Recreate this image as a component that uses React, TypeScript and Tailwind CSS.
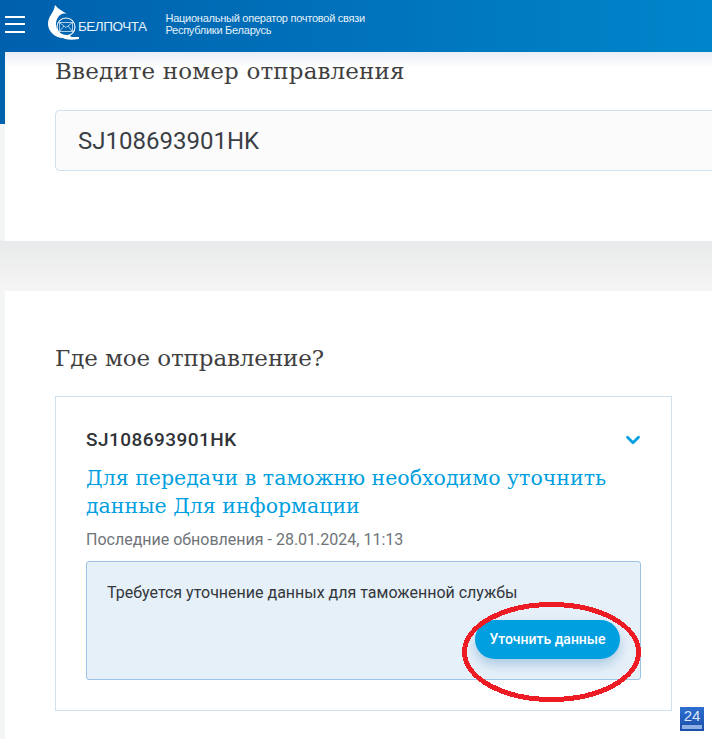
import { ChevronDown } from "lucide-react";

const slab = "font-['DejaVu_Serif','Liberation_Serif',serif]";

function Logo() {
  return (
    <div className="flex items-end">
      <svg width="32" height="36" viewBox="0 0 32 36" className="shrink-0">
        <path d="M7 0 C10 4 15 6 19 9 C15 8 13 9 11 11 C7 15 7 23 11 27 C14 30 20 31 23 29 C20 33 26 32 31 32 L31 34 C24 35 18 35 15 33 C7 33 0 26 0 19 C0 11 6 8 7 0Z" fill="#fff" />
        <circle cx="18" cy="22" r="9" fill="none" stroke="#fff" strokeWidth="1.1" />
        <path d="M11.5 17.5 H24.5 V26.5 H11.5Z M11.5 17.5 L18 22.5 L24.5 17.5 M11.5 26.5 L16 21 M24.5 26.5 L20 21" fill="none" stroke="#d7e8f5" strokeWidth="0.8" />
      </svg>
      <span className="-ml-[2px] mb-[5px] font-['Liberation_Sans',sans-serif] text-[13.5px] leading-[18px] tracking-[-0.5px] text-[#e6f1f9]">
        БЕЛПОЧТА
      </span>
    </div>
  );
}

export default function App() {
  return (
    <div className="relative h-[739px] w-[712px] overflow-hidden bg-[#f4f5f5] font-['Roboto',sans-serif]">
      {/* Header */}
      <header className="flex h-[52px] items-center bg-gradient-to-r from-[#0060ad] to-[#0085ca] pl-[5px]">
        <div className="-mt-[4px] flex w-5 flex-col gap-[5.5px]">
          <span className="h-[2px] bg-white" />
          <span className="h-[2px] bg-white" />
          <span className="h-[2px] bg-white" />
        </div>
        <div className="ml-[23px] -mt-[6px]">
          <Logo />
        </div>
        <p className="ml-[19px] -mt-[4px] font-['Liberation_Sans',sans-serif] text-[11px] leading-3 tracking-[-0.25px] text-[#e6f1f9]">
          Национальный оператор почтовой связи
          <br />
          Республики Беларусь
        </p>
      </header>

      <div className="flex">
        <div className="h-[72px] w-[5px] shrink-0 bg-[#0061ad]" />
        <div className="flex-1">
          {/* Tracking form */}
          <section className="h-[189px] bg-gradient-to-b from-[#e8eef5] via-white via-[8%] to-white pl-[50px] pt-1">
            <h2 className={`${slab} text-[23px] leading-[30px] tracking-[0.15px] text-[#3f3f3f]`}>
              Введите номер отправления
            </h2>
            <div className="mt-6 flex h-[61px] items-center rounded-l-[5px] border border-r-0 border-[#cfe0ee] bg-[#fbfbfb] pl-[22px] text-[24px] text-[#3a3f46]">
              SJ108693901HK
            </div>
          </section>
        </div>
      </div>

      <div className="h-[50px] bg-gradient-to-b from-[#e9eaeb] to-[#f5f5f5]" />

      {/* Result */}
      <section className="ml-[5px] h-[448px] bg-white pl-[50px] pt-[52px]">
        <h2 className={`${slab} text-[23px] leading-[30px] tracking-[-0.1px] text-[#3f3f3f]`}>
          Где мое отправление?
        </h2>
        <div className="mt-[23px] h-[315px] w-[617px] border border-[#cfe0ee] px-[30px] pt-[30px]">
          <div className="flex items-center justify-between">
            <span className="text-[19px] font-medium leading-[26px] tracking-[0.45px] text-[#2f3338]">SJ108693901HK</span>
            <ChevronDown className="mr-[-3px] h-[22px] w-[22px] text-[#009fdf]" strokeWidth={3} />
          </div>
          <h3 className={`${slab} mt-[11px] text-[20.5px] leading-[28px] text-[#009fdf]`}>
            Для передачи в таможню необходимо уточнить данные Для информации
          </h3>
          <p className="mt-[10px] text-[16px] leading-5 text-[#6f7479]">
            Последние обновления - 28.01.2024, 11:13
          </p>
          <div className="mt-[11px] h-[119px] rounded-[3px] border border-[#9cc4e6] bg-[#e6f0f9] pl-5 pr-5 pt-[21px]">
            <p className="text-[16px] leading-5 text-[#33373c]">
              Требуется уточнение данных для таможенной службы
            </p>
            <div className="mt-[17px] flex justify-end">
              <button className="h-[39px] w-[145px] rounded-full bg-[#009fdf] text-[14px] font-medium text-white shadow-[0_6px_12px_rgba(0,90,160,0.25)]">
                Уточнить данные
              </button>
            </div>
          </div>
        </div>
      </section>

      {/* Red annotation */}
      <svg className="absolute left-[458px] top-[600px]" width="187" height="104" viewBox="0 0 187 104">
        <ellipse cx="93.5" cy="52" rx="87" ry="47.5" fill="none" stroke="#ed1c24" strokeWidth="5" shapeRendering="crispEdges" />
      </svg>

      {/* Badge */}
      <div className="absolute left-[680px] top-[707px] flex h-6 w-6 flex-col items-center bg-gradient-to-b from-[#2f6fd0] to-[#1a4ea8] text-[#dbe7fa]">
        <span className="font-['Liberation_Sans',sans-serif] text-[15px] leading-[17px]">24</span>
        <span className="mt-[1px] h-1 w-5 bg-[#8fb0e4]" />
      </div>
    </div>
  );
}
